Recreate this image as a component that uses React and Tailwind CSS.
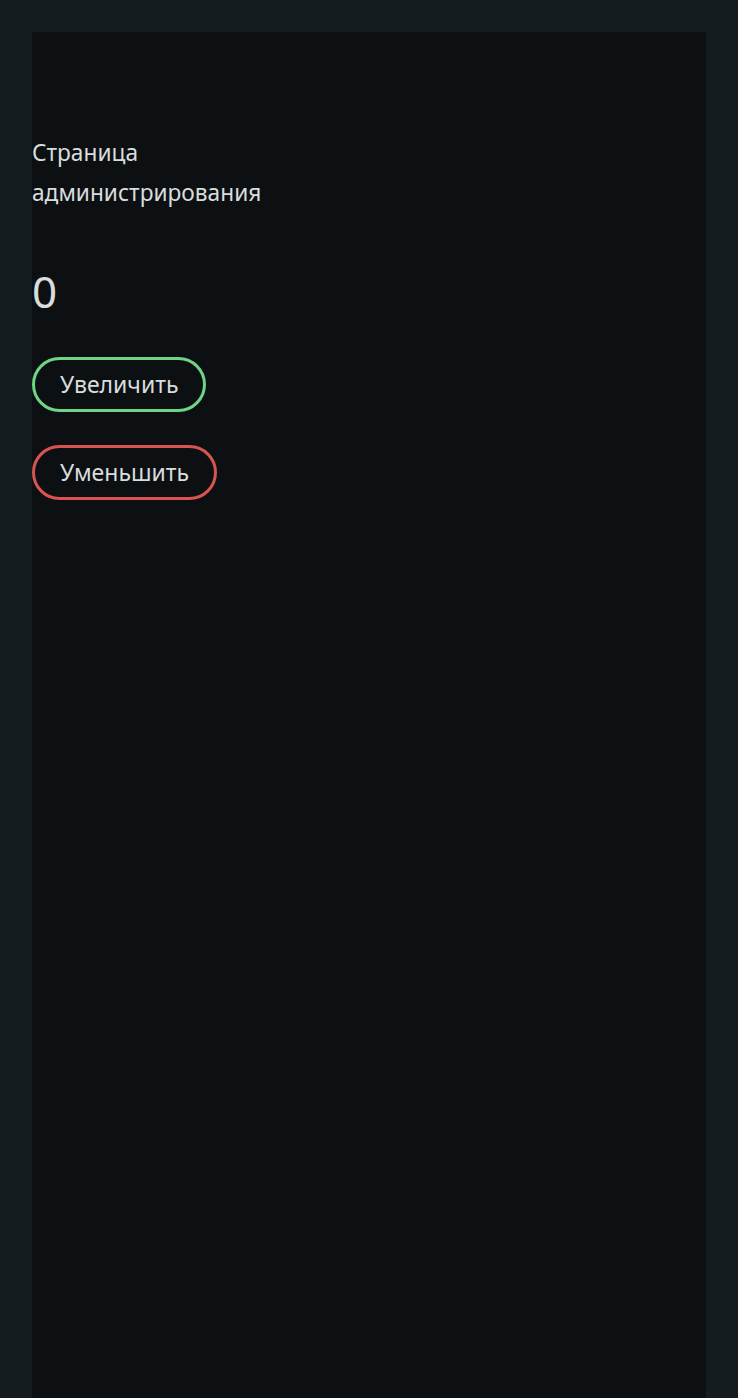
export default function App() {
  return (
    <div className="min-h-screen bg-[#151c1f] px-8 pt-8" style={{ fontFamily: '"Noto Sans", "Open Sans", sans-serif' }}>
      <div className="min-h-[1366px] bg-[#0c1013] pt-[101px] text-[#d9dddd]">
        <h1 className="w-[270px] text-[22.7px] font-normal leading-[40px]">Страница администрирования</h1>
        <div className="mt-[50px] text-[44px] leading-[56px]">0</div>
        <div className="mt-[38px] flex flex-col items-start gap-[33px]">
          <button className="h-[55px] rounded-full border-[3px] border-[#6fd484] px-[25px] text-[23px] text-[#d9dddd]">Увеличить</button>
          <button className="h-[55px] rounded-full border-[3px] border-[#d9534f] px-[25px] text-[23px] text-[#d9dddd]">Уменьшить</button>
        </div>
      </div>
    </div>
  );
}
